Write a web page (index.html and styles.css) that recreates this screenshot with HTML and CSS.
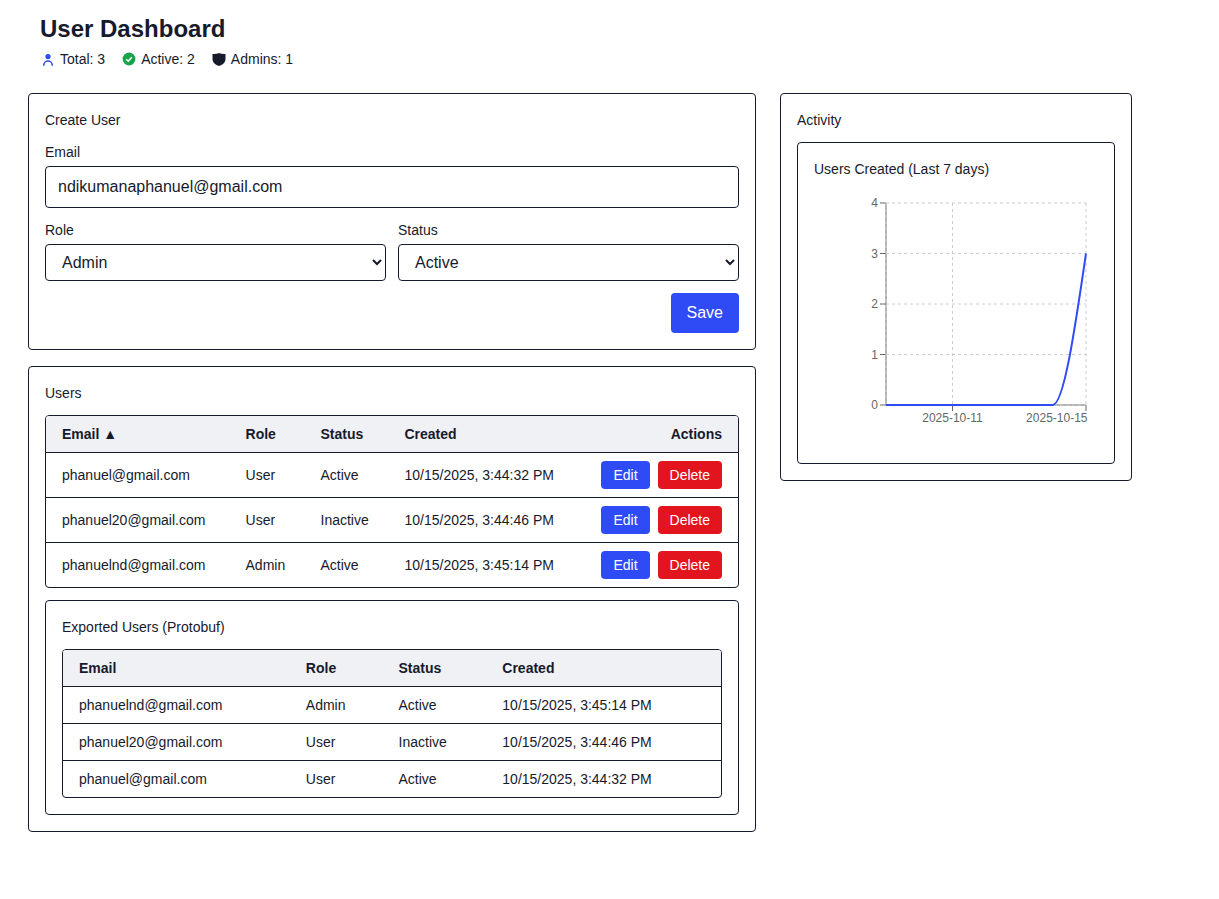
FILE: index.html
```html
<!DOCTYPE html>
<html lang="en">

<head>
    <meta charset="UTF-8">
    <meta name="viewport" content="width=device-width, initial-scale=1.0">
    <title>User Dashboard</title>
    <link rel="stylesheet" href="styles.css">
</head>

<body>
    <div class="page">
        <header class="page-header">
            <h1>User Dashboard</h1>
            <div class="stats">
                <span class="stat">
                    <svg class="stat-icon" viewBox="0 0 16 16" fill="none">
                        <circle cx="8" cy="5.6" r="2.6" fill="#2f4bf5"/>
                        <path d="M3.8 14.8v-.6a4.2 4.2 0 0 1 8.4 0v.6" stroke="#2f4bf5" stroke-width="1.5"/>
                    </svg>
                    Total: 3
                </span>
                <span class="stat">
                    <svg class="stat-icon" viewBox="0 0 16 16" fill="none">
                        <circle cx="8" cy="8" r="6.4" fill="#16a34a"/>
                        <path d="M5.2 8.2l2 2 3.6-3.9" stroke="#fff" stroke-width="1.6"/>
                    </svg>
                    Active: 2
                </span>
                <span class="stat">
                    <svg class="stat-icon" viewBox="0 0 16 16">
                        <path d="M8 2C9.5 2.6 12 3 14.5 3V8C14.5 11.5 11.5 14 8 15C4.5 14 1.5 11.5 1.5 8V3C4 3 6.5 2.6 8 2z" fill="#161a2b"/>
                    </svg>
                    Admins: 1
                </span>
            </div>
        </header>

        <div class="layout">
            <div class="main-col">
                <section class="card">
                    <h2 class="card-title">Create User</h2>
                    <form class="user-form">
                        <div class="field">
                            <label for="email">Email</label>
                            <input type="email" id="email" class="text-input" value="ndikumanaphanuel@gmail.com">
                        </div>
                        <div class="field-row">
                            <div class="field">
                                <label for="role">Role</label>
                                <select id="role" class="select-input">
                                    <option>Admin</option>
                                    <option>User</option>
                                </select>
                            </div>
                            <div class="field">
                                <label for="status">Status</label>
                                <select id="status" class="select-input">
                                    <option>Active</option>
                                    <option>Inactive</option>
                                </select>
                            </div>
                        </div>
                        <div class="form-actions">
                            <button type="button" class="btn btn-primary btn-large">Save</button>
                        </div>
                    </form>
                </section>

                <section class="card">
                    <h2 class="card-title">Users</h2>
                    <div class="table-wrap">
                        <table class="users-table">
                            <thead>
                                <tr>
                                    <th>Email ▲</th>
                                    <th>Role</th>
                                    <th>Status</th>
                                    <th>Created</th>
                                    <th class="align-right">Actions</th>
                                </tr>
                            </thead>
                            <tbody>
                                <tr>
                                    <td>phanuel@gmail.com</td>
                                    <td>User</td>
                                    <td>Active</td>
                                    <td>10/15/2025, 3:44:32 PM</td>
                                    <td class="row-actions"><button class="btn btn-primary">Edit</button><button class="btn btn-danger">Delete</button></td>
                                </tr>
                                <tr>
                                    <td>phanuel20@gmail.com</td>
                                    <td>User</td>
                                    <td>Inactive</td>
                                    <td>10/15/2025, 3:44:46 PM</td>
                                    <td class="row-actions"><button class="btn btn-primary">Edit</button><button class="btn btn-danger">Delete</button></td>
                                </tr>
                                <tr>
                                    <td>phanuelnd@gmail.com</td>
                                    <td>Admin</td>
                                    <td>Active</td>
                                    <td>10/15/2025, 3:45:14 PM</td>
                                    <td class="row-actions"><button class="btn btn-primary">Edit</button><button class="btn btn-danger">Delete</button></td>
                                </tr>
                            </tbody>
                        </table>
                    </div>

                    <div class="card inner-card export-card">
                        <h3 class="card-title">Exported Users (Protobuf)</h3>
                        <div class="table-wrap">
                            <table class="users-table">
                                <thead>
                                    <tr>
                                        <th>Email</th>
                                        <th>Role</th>
                                        <th>Status</th>
                                        <th>Created</th>
                                    </tr>
                                </thead>
                                <tbody>
                                    <tr>
                                        <td>phanuelnd@gmail.com</td>
                                        <td>Admin</td>
                                        <td>Active</td>
                                        <td>10/15/2025, 3:45:14 PM</td>
                                    </tr>
                                    <tr>
                                        <td>phanuel20@gmail.com</td>
                                        <td>User</td>
                                        <td>Inactive</td>
                                        <td>10/15/2025, 3:44:46 PM</td>
                                    </tr>
                                    <tr>
                                        <td>phanuel@gmail.com</td>
                                        <td>User</td>
                                        <td>Active</td>
                                        <td>10/15/2025, 3:44:32 PM</td>
                                    </tr>
                                </tbody>
                            </table>
                        </div>
                    </div>
                </section>
            </div>

            <aside class="side-col">
                <section class="card">
                    <h2 class="card-title">Activity</h2>
                    <div class="card inner-card chart-card">
                        <h3 class="card-title">Users Created (Last 7 days)</h3>
                        <svg class="chart" width="284" height="256" viewBox="0 1 284 256">
                            <g class="chart-axis">
                                <line x1="72" y1="13" x2="72" y2="215"/>
                                <line x1="72" y1="215" x2="272" y2="215"/>
                                <line x1="66" y1="13" x2="72" y2="13"/>
                                <line x1="66" y1="63.5" x2="72" y2="63.5"/>
                                <line x1="66" y1="114" x2="72" y2="114"/>
                                <line x1="66" y1="164.5" x2="72" y2="164.5"/>
                                <line x1="66" y1="215" x2="72" y2="215"/>
                                <line x1="138.5" y1="215" x2="138.5" y2="221"/>
                                <line x1="272" y1="215" x2="272" y2="221"/>
                            </g>
                            <g class="chart-grid">
                                <line x1="72" y1="13" x2="272" y2="13"/>
                                <line x1="72" y1="63.5" x2="272" y2="63.5"/>
                                <line x1="72" y1="114" x2="272" y2="114"/>
                                <line x1="72" y1="164.5" x2="272" y2="164.5"/>
                                <line x1="72" y1="215" x2="272" y2="215"/>
                                <line x1="72" y1="13" x2="72" y2="215"/>
                                <line x1="138.5" y1="13" x2="138.5" y2="215"/>
                                <line x1="272" y1="13" x2="272" y2="215"/>
                            </g>
                            <g class="chart-labels">
                                <text x="64" y="17.3" text-anchor="end">4</text>
                                <text x="64" y="67.8" text-anchor="end">3</text>
                                <text x="64" y="118.3" text-anchor="end">2</text>
                                <text x="64" y="168.8" text-anchor="end">1</text>
                                <text x="64" y="219.3" text-anchor="end">0</text>
                                <text x="138.5" y="232" text-anchor="middle">2025-10-11</text>
                                <text x="273.5" y="232" text-anchor="end">2025-10-15</text>
                            </g>
                            <path class="chart-line" d="M72 215H238.7C249.8 215 260.9 139.3 272 63.5"/>
                        </svg>
                    </div>
                </section>
            </aside>
        </div>
    </div>
</body>

</html>
```

FILE: styles.css
```css
* {
    box-sizing: border-box;
}

body {
    margin: 0;
    font-family: "Liberation Sans", Arial, sans-serif;
    font-size: 14px;
    line-height: 20px;
    color: #161a2b;
    background-color: #fff;
}

.page {
    width: 1104px;
    margin-left: 28px;
}

.page-header {
    padding: 13px 12px 0;
    height: 93px;
}

.page-header h1 {
    margin: 0;
    font-size: 24px;
    line-height: 32px;
    font-weight: 700;
}

.stats {
    display: flex;
    gap: 16px;
    margin-top: 4px;
}

.stat {
    display: flex;
    align-items: center;
    gap: 4px;
}

.stat-icon {
    width: 16px;
    height: 16px;
}

.layout {
    display: grid;
    grid-template-columns: 728px 352px;
    gap: 24px;
    align-items: start;
}

.main-col {
    display: flex;
    flex-direction: column;
    gap: 16px;
}

.card {
    border: 1px solid #161a2b;
    border-radius: 4px;
    padding: 16px;
}

.card-title {
    margin: 0 0 12px;
    font-size: 14px;
    line-height: 20px;
    font-weight: 400;
}

.field {
    flex: 1;
    min-width: 0;
}

.field label {
    display: block;
    margin-bottom: 4px;
}

.text-input,
.select-input {
    display: block;
    width: 100%;
    border: 1px solid #161a2b;
    border-radius: 4px;
    background-color: #fff;
    color: #161a2b;
    font-family: inherit;
    font-size: 16px;
}

.text-input {
    height: 42px;
    padding: 0 12px;
}

.select-input {
    height: 37px;
    padding: 0 12px;
}

.field-row {
    display: flex;
    gap: 12px;
    margin-top: 12px;
}

.form-actions {
    display: flex;
    justify-content: flex-end;
    margin-top: 12px;
}

.btn {
    height: 28px;
    padding: 0 12px;
    border: none;
    border-radius: 4px;
    color: #fff;
    font-family: inherit;
    font-size: 14px;
    cursor: pointer;
}

.btn-primary {
    background-color: #2f4bf5;
}

.btn-danger {
    background-color: #e2141e;
}

.btn-large {
    height: 40px;
    padding: 0 16px;
    font-size: 16px;
}

.table-wrap {
    border: 1px solid #161a2b;
    border-radius: 4px;
    overflow: hidden;
}

.users-table {
    width: 100%;
    border-collapse: collapse;
}

.users-table th {
    padding: 8px 16px;
    background-color: #f0f1f5;
    border-bottom: 1px solid #161a2b;
    text-align: left;
    font-weight: 700;
}

.users-table td {
    padding: 8px 16px;
    border-bottom: 1px solid #161a2b;
}

.users-table tbody tr:last-child td {
    border-bottom: none;
}

.users-table .align-right {
    text-align: right;
}

.row-actions {
    text-align: right;
    white-space: nowrap;
}

.row-actions .btn + .btn {
    margin-left: 8px;
}

.export-card {
    margin-top: 12px;
}

.chart {
    display: block;
}

.chart-grid line {
    stroke: #ccc;
    stroke-dasharray: 3 3;
}

.chart-axis line {
    stroke: #666;
}

.chart-labels text {
    fill: #666;
    font-size: 12px;
}

.chart-line {
    fill: none;
    stroke: #2f4bf5;
    stroke-width: 2;
}
```
